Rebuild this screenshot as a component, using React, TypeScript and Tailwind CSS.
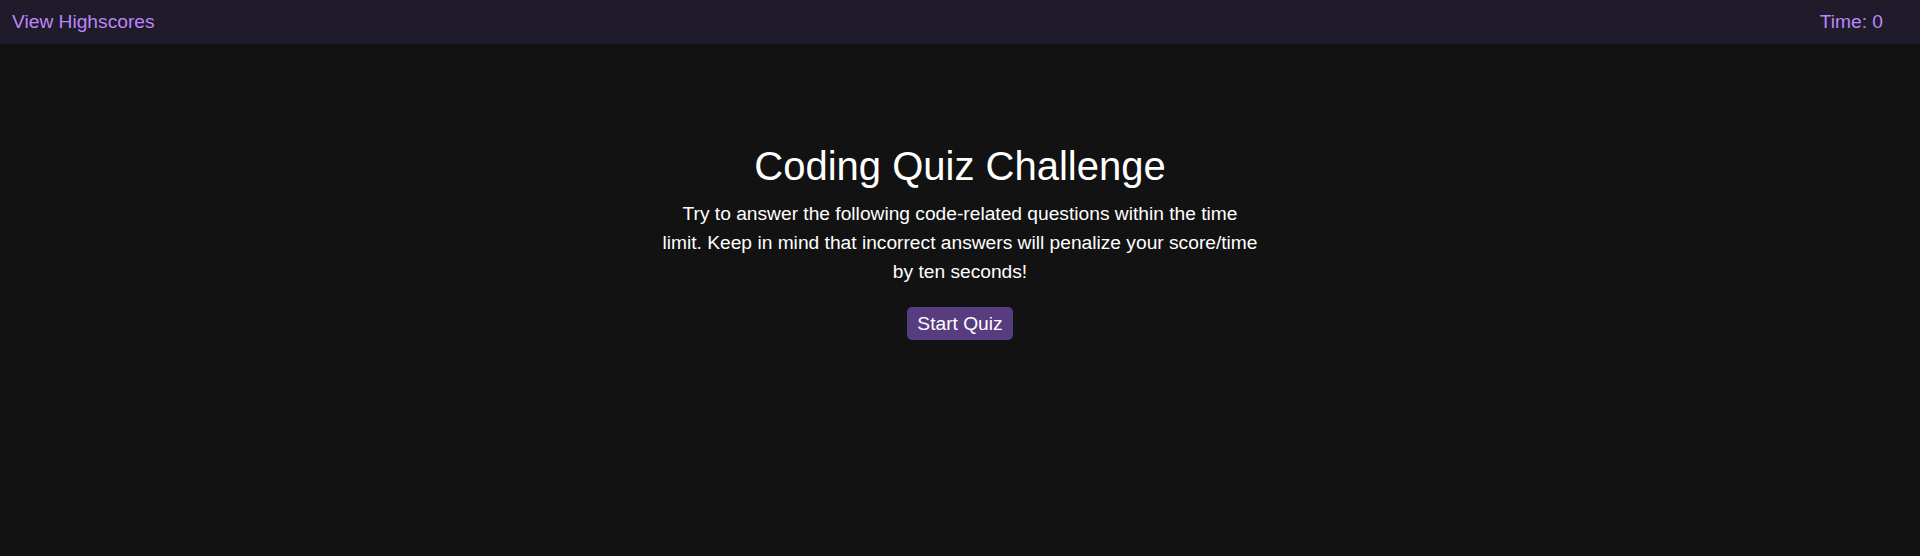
import React from "react";

export default function App() {
  return (
    <div
      className="min-h-[556px] bg-[#121212] text-white"
      style={{ fontFamily: '"Liberation Sans", Arial, sans-serif' }}
    >
      <header className="flex h-[44px] items-center justify-between bg-[#1f1b2a] pl-3 pr-[37px] text-[19.2px] text-[#bb86fc]">
        <a className="cursor-pointer">View Highscores</a>
        <span>Time: 0</span>
      </header>
      <main className="flex flex-col items-center pt-[99px]">
        <h1 className="text-[40px] leading-[46px]">Coding Quiz Challenge</h1>
        <p className="mt-[11px] w-[596px] text-center text-[19.2px] leading-[28.8px]">
          Try to answer the following code-related questions within the time limit. Keep in mind that
          incorrect answers will penalize your score/time by ten seconds!
        </p>
        <button className="mt-[21px] rounded-[5px] bg-[#583c80] px-[10.5px] py-[5.5px] text-[19.2px] leading-[22px] text-white">
          Start Quiz
        </button>
      </main>
    </div>
  );
}
